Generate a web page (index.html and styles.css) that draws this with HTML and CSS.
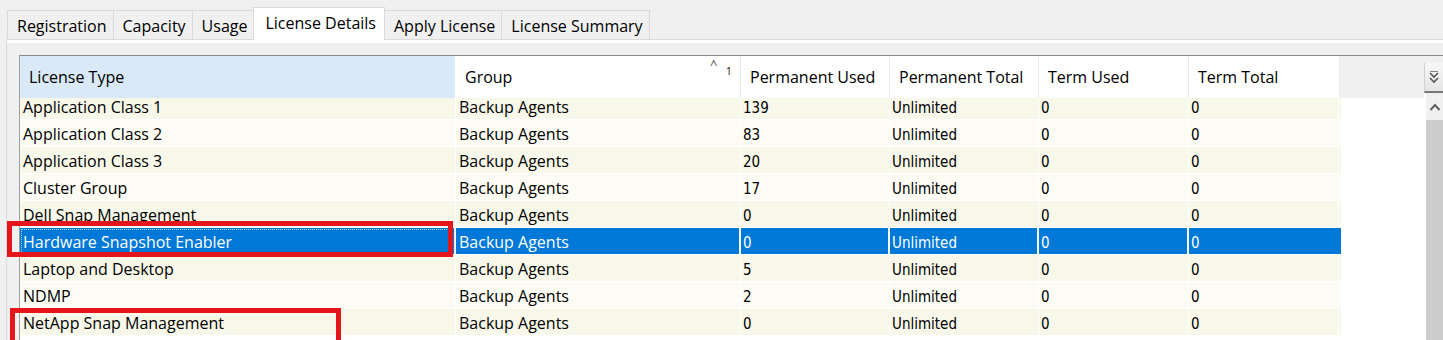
FILE: index.html
```html
<!DOCTYPE html>
<html lang="en">
<head>
    <meta charset="UTF-8">
    <title>License Details</title>
    <link rel="stylesheet" href="styles.css">
</head>
<body>
    <div class="tabs">
        <div class="tab">Registration</div>
        <div class="tab">Capacity</div>
        <div class="tab">Usage</div>
        <div class="tab active">License Details</div>
        <div class="tab">Apply License</div>
        <div class="tab">License Summary</div>
    </div>

    <div class="panel">
        <div class="grid">
            <div class="head">
                <div class="hcell sorted">License Type</div>
                <div class="hcell">Group<span class="sort">^</span><span class="sortnum">1</span></div>
                <div class="hcell">Permanent Used</div>
                <div class="hcell">Permanent Total</div>
                <div class="hcell">Term Used</div>
                <div class="hcell">Term Total</div>
                <div class="hcell filler"></div>
                <div class="hcell menu">
                    <svg width="12" height="14" viewBox="0 0 12 14">
                        <path d="M2 3 L6 7 L10 3 M2 8 L6 12 L10 8" fill="none" stroke="#555" stroke-width="1.6"/>
                        <path d="M2 1.5 H10" stroke="#888" stroke-width="1"/>
                    </svg>
                </div>
            </div>
            <div class="body">
                <div class="rows" id="rows"></div>
                <div class="empty"></div>
                <div class="scroll">
                    <div class="arrow">
                        <svg width="12" height="8" viewBox="0 0 12 8"><path d="M1.5 7 L6 2 L10.5 7" fill="none" stroke="#606060" stroke-width="2"/></svg>
                    </div>
                    <div class="track"></div>
                </div>
            </div>
        </div>
    </div>

    <div class="mark mark1"></div>
    <div class="mark mark2"></div>

    <script>
        const licenses = [
            ["Application Class 1", "Backup Agents", "139", "Unlimited", "0", "0"],
            ["Application Class 2", "Backup Agents", "83", "Unlimited", "0", "0"],
            ["Application Class 3", "Backup Agents", "20", "Unlimited", "0", "0"],
            ["Cluster Group", "Backup Agents", "17", "Unlimited", "0", "0"],
            ["Dell Snap Management", "Backup Agents", "0", "Unlimited", "0", "0"],
            ["Hardware Snapshot Enabler", "Backup Agents", "0", "Unlimited", "0", "0"],
            ["Laptop and Desktop", "Backup Agents", "5", "Unlimited", "0", "0"],
            ["NDMP", "Backup Agents", "2", "Unlimited", "0", "0"],
            ["NetApp Snap Management", "Backup Agents", "0", "Unlimited", "0", "0"]
        ];

        const rows = document.getElementById("rows");
        licenses.forEach((item, i) => {
            const row = document.createElement("div");
            row.className = "row" + (i % 2 ? " even" : "") + (i === 5 ? " selected" : "");
            item.forEach((text, c) => {
                const cell = document.createElement("div");
                cell.className = "cell" + (c > 1 ? " num" : "");
                cell.innerText = text;
                row.appendChild(cell);
            });
            rows.appendChild(row);
        });
    </script>
</body>
</html>
```

FILE: styles.css
```css
body {
    margin: 0;
    background-color: #f0f0f0;
    font-family: 'Open Sans', 'Noto Sans', sans-serif;
    font-size: 16px;
    color: #000;
    overflow: hidden;
    height: 340px;
}

.tabs {
    display: flex;
    align-items: flex-end;
    height: 39px;
    padding-left: 7px;
}

.tab {
    height: 29px;
    line-height: 30px;
    padding: 0 6px 0 9px;
    border: 1px solid #dadada;
    border-bottom: none;
    margin-right: -1px;
    background-color: #f0f0f0;
    box-sizing: border-box;
}

.tab.active {
    height: 33px;
    line-height: 31px;
    background-color: #fff;
    padding: 0 8px 0 11px;
    position: relative;
    z-index: 1;
    margin-bottom: -1px;
}

.panel {
    margin-left: 6px;
    border-top: 1px solid #dadada;
    border-left: 1px solid #dadada;
    padding-top: 15px;
    box-shadow: inset 0 3px 0 #fff;
}

.grid {
    margin-left: 12px;
    border-top: 1px solid #8c8c8c;
    border-left: 1px solid #a0a0a0;
}

.head {
    display: grid;
    grid-template-columns: 436px 285px 149px 149px 150px 151px 84px 1fr;
    height: 37px;
}

.hcell {
    background-color: #fff;
    border-right: 1px solid #ebebeb;
    padding-left: 9px;
    line-height: 42px;
    position: relative;
    white-space: nowrap;
}

.hcell.sorted {
    background-color: #d9e9f8;
    border-right-color: #fff;
}

.hcell.filler {
    background-color: #f0f0f0;
    border-right: none;
}

.hcell.menu {
    background: linear-gradient(#f7f7f7, #e6e6e6);
    border-left: 1px solid #d0d0d0;
    border-bottom: 2px solid #777;
    border-right: none;
    padding: 0;
    display: flex;
    align-items: center;
    justify-content: center;
    margin-top: 7px;
    height: 28px;
}

.sort {
    position: absolute;
    left: 254px;
    top: -13px;
    font-size: 13px;
    color: #555;
}

.sortnum {
    position: absolute;
    left: 270px;
    top: -6px;
    font-size: 10px;
}

.body {
    display: grid;
    grid-template-columns: 1321px 84px 1fr;
    background-color: #fff;
    height: 250px;
}

.row {
    display: grid;
    grid-template-columns: 436px 285px 149px 149px 150px 150px;
    height: 27px;
    background-color: #f8f8ea;
    box-shadow: inset 0 -1px 0 #fff;
}

.row.even {
    background-color: #fcfcf4;
}

.cell {
    border-right: 1px solid #fff;
    padding-left: 3px;
    line-height: 28px;
    white-space: nowrap;
    overflow: hidden;
}

.cell.num {
    font-family: 'DejaVu Sans Condensed', 'DejaVu Sans', sans-serif;
    font-size: 15px;
    line-height: 30px;
    padding-left: 2px;
}

.row.selected {
    background-color: #0078d7;
    color: #fff;
}

.row.selected .cell {
    border-right: 2px solid #fff;
}

.row.selected .cell:last-child {
    border-right: none;
}

.row.selected .cell:first-child {
    outline: 1px dotted #a8d0f0;
    outline-offset: -2px;
}

.scroll {
    border-left: 1px solid #fff;
}

.arrow {
    height: 27px;
    background-color: #f0f0f0;
    display: flex;
    align-items: center;
    justify-content: center;
}

.track {
    height: 230px;
    background-color: #cdcdcd;
}

.mark {
    position: absolute;
    border: 5px solid #e4161b;
    box-sizing: border-box;
}

.mark1 {
    left: 7px;
    top: 221px;
    width: 446px;
    height: 36px;
}

.mark2 {
    left: 10px;
    top: 308px;
    width: 331px;
    height: 40px;
}
```
